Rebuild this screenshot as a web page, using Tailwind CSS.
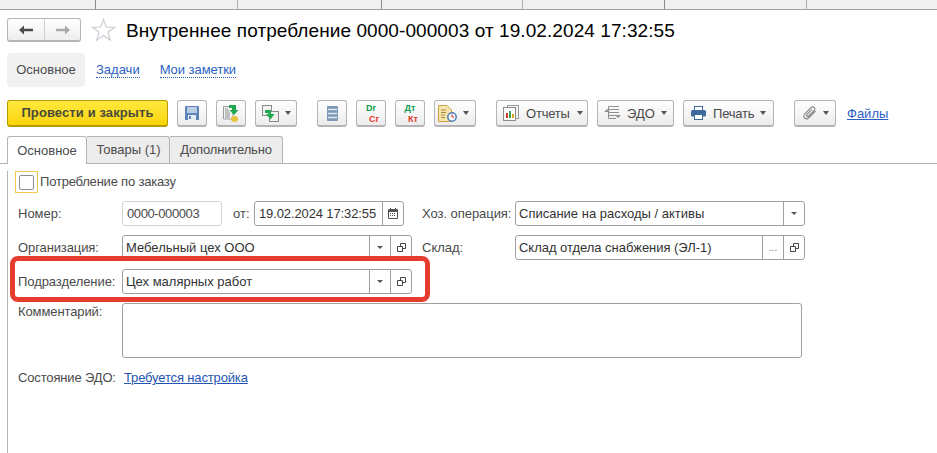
<!DOCTYPE html>
<html lang="ru">
<head>
  <meta charset="UTF-8" />
  <title>Внутреннее потребление</title>
  <script src="https://cdn.jsdelivr.net/npm/@tailwindcss/browser@4"></script>
</head>
<body class="bg-white w-[937px] h-[453px] overflow-hidden relative font-['Liberation_Sans',Arial,sans-serif] text-[13px] text-[#4b4b4b]">

  <!-- top strip -->
  <div class="h-[10px] bg-[#f0f0f0] border-b border-[#a0a0a0] flex">
    <div class="w-[96px] border-r border-[#8c8c8c]"></div>
    <div class="w-[142px] border-r border-[#b0b0b0]"></div>
    <div class="w-[144px] border-r border-[#8c8c8c]"></div>
    <div class="w-[141px] border-r border-[#b0b0b0]"></div>
    <div class="w-[142px] border-r border-[#8c8c8c]"></div>
    <div class="w-[142px] border-r border-[#b0b0b0]"></div>
  </div>

  <!-- title -->
  <div class="flex items-center h-[24px] mt-[8px] pl-[7px]">
    <div class="flex w-[74px] h-[24px] rounded-[3px] border border-[#b4b4b4] border-b-2 bg-gradient-to-b from-white to-[#eeeeee]">
      <div class="w-[37px] border-r border-[#d0d0d0] flex items-center justify-center">
        <svg width="16" height="12" viewBox="0 0 16 12"><path d="M1 6 L6 1.5 V4.7 H15 V7.3 H6 V10.5 Z" fill="#4a4a4a"/></svg>
      </div>
      <div class="flex-1 flex items-center justify-center">
        <svg width="16" height="12" viewBox="0 0 16 12"><path d="M15 6 L10 1.5 V4.7 H1 V7.3 H10 V10.5 Z" fill="#a8a8a8"/></svg>
      </div>
    </div>
    <svg class="ml-[10px]" width="25" height="24" viewBox="0 0 25 24"><path d="M12.5 1.5 L15.3 9 L23.5 9.3 L17 14.3 L19.4 22.3 L12.5 17.6 L5.6 22.3 L8 14.3 L1.5 9.3 L9.7 9 Z" fill="white" stroke="#c9ced3" stroke-width="1.2"/></svg>
    <h1 class="ml-[10px] text-[19px] tracking-[0.08px] text-black leading-none font-normal whitespace-nowrap">Внутреннее потребление 0000-000003 от 19.02.2024 17:32:55</h1>
  </div>

  <!-- form sections -->
  <div class="flex items-center h-[34px] mt-[11px] pl-[7px]">
    <div class="w-[78px] h-[34px] bg-[#f1f1f1] rounded-[4px] flex items-center justify-center">Основное</div>
    <a class="ml-[11px] text-[#2a5fc4] border-b border-dotted border-[#2a5fc4] leading-[14px]">Задачи</a>
    <a class="ml-[20px] text-[#2a5fc4] border-b border-dotted border-[#2a5fc4] leading-[14px] tracking-[-0.05px]">Мои заметки</a>
  </div>

  <!-- command bar -->
  <div class="flex items-start h-[27px] mt-[13px] pl-[7px]">
    <button class="w-[161px] h-[27px] rounded-[3px] border border-[#b59b00] border-b-2 bg-gradient-to-b from-[#ffe93b] to-[#fbd400] font-bold text-[13px] tracking-[0.1px] text-[#4a4a3a]">Провести и закрыть</button>
    <button class="ml-[9px] w-[30px] h-[27px] rounded-[3px] border border-[#b4b4b4] border-b-2 bg-gradient-to-b from-white to-[#ececec] flex items-center justify-center">
      <svg width="14" height="14" viewBox="0 0 14 14"><path d="M0 1 Q0 0 1 0 H13 Q14 0 14 1 V14 H0 Z" fill="#5c84b8"/><rect x="2" y="1" width="10" height="6" fill="#b9cde6"/><rect x="3" y="9" width="8" height="5" fill="#e6ecf3"/><rect x="4" y="10" width="2" height="3" fill="#5c84b8"/></svg>
    </button>
    <button class="ml-[9px] w-[30px] h-[27px] rounded-[3px] border border-[#b4b4b4] border-b-2 bg-gradient-to-b from-white to-[#ececec] flex items-center justify-center">
      <svg width="16" height="18" viewBox="0 0 16 18"><path d="M0.5 2.5 H10 V15 H0.5 Z" fill="#f4f4f4" stroke="#9a9a9a"/><path d="M2 5 H5 M2 7 H6 M2 9 H7 M2 11 H7 M2 13 H7" stroke="#8a8a8a"/><ellipse cx="11.5" cy="15" rx="3.5" ry="3" fill="#e8c33c"/><path d="M6 4 V1 H13 V6 H15.5 L11 11 L6.5 6 H9 V4 Z" fill="#1fa84f"/></svg>
    </button>
    <button class="ml-[9px] w-[42px] h-[27px] rounded-[3px] border border-[#b4b4b4] border-b-2 bg-gradient-to-b from-white to-[#ececec] flex items-center pl-[6px] gap-[6px]">
      <svg width="17" height="17" viewBox="0 0 17 17"><rect x="0.5" y="0.5" width="9" height="10" fill="#f1f1f1" stroke="#8b8b8b"/><rect x="7.5" y="6.5" width="9" height="10" fill="#f1f1f1" stroke="#8b8b8b"/><path d="M3 5 H9 V9 H12.5 L8.5 14.5 L4 9 H6.5 V8 H3 Z" fill="#1fa84f"/></svg>
      <span class="w-0 h-0 border-x-[3.5px] border-x-transparent border-t-[4px] border-t-[#555]"></span>
    </button>
    <button class="ml-[20px] w-[30px] h-[27px] rounded-[3px] border border-[#b4b4b4] border-b-2 bg-gradient-to-b from-white to-[#ececec] flex items-center justify-center">
      <svg width="11" height="15" viewBox="0 0 11 15"><rect width="11" height="15" rx="1" fill="#7d97b5"/><path d="M1 3.5 H10 M1 7.5 H10 M1 11.5 H10" stroke="#dfe7f0" stroke-width="1.4"/></svg>
    </button>
    <button class="ml-[9px] w-[30px] h-[27px] rounded-[3px] border border-[#b4b4b4] border-b-2 bg-gradient-to-b from-white to-[#ececec] flex flex-col px-[6px] pt-[2px] text-[9px] font-bold leading-[10.5px]">
      <span class="text-[#0f9a4a]">Dr</span><span class="self-end text-[#e5352b]">Cr</span>
    </button>
    <button class="ml-[9px] w-[30px] h-[27px] rounded-[3px] border border-[#b4b4b4] border-b-2 bg-gradient-to-b from-white to-[#ececec] flex flex-col px-[6px] pt-[2px] text-[9px] font-bold leading-[10.5px]">
      <span class="text-[#0f9a4a]">Дт</span><span class="self-end text-[#e5352b]">Кт</span>
    </button>
    <button class="ml-[9px] w-[42px] h-[27px] rounded-[3px] border border-[#b4b4b4] border-b-2 bg-gradient-to-b from-white to-[#ececec] flex items-center pl-[3px] gap-[6px]">
      <svg width="19" height="17" viewBox="0 0 19 17"><path d="M0.5 0.5 H9 L13.5 5 V16.5 H0.5 Z" fill="#f6e6ae" stroke="#c9a243"/><path d="M3 5 H8 M3 7.5 H8 M3 10 H7 M3 12.5 H7" stroke="#a98b3c"/><circle cx="14" cy="12" r="4.2" fill="#f5f7fa" stroke="#4f7db5" stroke-width="1.5"/><path d="M14 9.5 V12 H16" stroke="#d33" fill="none"/></svg>
      <span class="w-0 h-0 border-x-[3.5px] border-x-transparent border-t-[4px] border-t-[#555]"></span>
    </button>
    <button class="ml-[20px] w-[92px] h-[27px] rounded-[3px] border border-[#b4b4b4] border-b-2 bg-gradient-to-b from-white to-[#ececec] flex items-center pl-[6px]">
      <svg width="16" height="16" viewBox="0 0 16 16"><rect x="4.5" y="0.5" width="11" height="13" fill="#f4f4f4" stroke="#9a9a9a"/><rect x="0.5" y="2.5" width="12" height="13" fill="#fff" stroke="#8b8b8b"/><rect x="3" y="8" width="2" height="5" fill="#d33c2c"/><rect x="6" y="6" width="2" height="7" fill="#3aa655"/><rect x="9" y="9" width="2" height="4" fill="#d9a520"/></svg>
      <span class="ml-[7px] pt-px tracking-[-0.2px]">Отчеты</span>
      <span class="ml-[7px] w-0 h-0 border-x-[3.5px] border-x-transparent border-t-[4px] border-t-[#555]"></span>
    </button>
    <button class="ml-[9px] w-[77px] h-[27px] rounded-[3px] border border-[#b4b4b4] border-b-2 bg-gradient-to-b from-white to-[#ececec] flex items-center pl-[6px]">
      <svg width="17" height="15" viewBox="0 0 17 15"><path d="M4.5 0.5 H15 M4.5 3.5 H15 M4.5 6.5 H15 M4.5 9.5 H15 M4.5 12.5 H12 M4.5 0.5 V12.5" stroke="#8f8f8f" fill="none"/><path d="M0 6 L3 3 L6 6 Z M11 9 L17 9 L14 12 Z" fill="#8f8f8f"/></svg>
      <span class="ml-[6px] pt-px">ЭДО</span>
      <span class="ml-[6px] w-0 h-0 border-x-[3.5px] border-x-transparent border-t-[4px] border-t-[#555]"></span>
    </button>
    <button class="ml-[9px] w-[91px] h-[27px] rounded-[3px] border border-[#b4b4b4] border-b-2 bg-gradient-to-b from-white to-[#ececec] flex items-center pl-[7px]">
      <svg width="15" height="14" viewBox="0 0 15 14"><rect x="3.5" y="0.5" width="8" height="4" fill="#fff" stroke="#3d6a9c"/><rect x="0" y="4" width="15" height="6.5" rx="1.5" fill="#3d6a9c"/><rect x="3.5" y="8.5" width="8" height="5" fill="#fff" stroke="#3d6a9c"/></svg>
      <span class="ml-[7px] pt-px tracking-[-0.2px]">Печать</span>
      <span class="ml-[6px] w-0 h-0 border-x-[3.5px] border-x-transparent border-t-[4px] border-t-[#555]"></span>
    </button>
    <button class="ml-[20px] w-[42px] h-[27px] rounded-[3px] border border-[#b4b4b4] border-b-2 bg-gradient-to-b from-white to-[#ececec] flex items-center pl-[8px] gap-[6px]">
      <svg width="14" height="14" viewBox="0 0 14 14"><path d="M12.5 5 L6 11.5 C4.5 13 2.5 13 1.5 12 C0.5 11 0.7 9 2 7.7 L8 1.7 C9 .7 10.3 .7 11.2 1.5 C12 2.3 12 3.6 11 4.6 L5.5 10 C5 10.5 4.2 10.5 3.8 10 C3.4 9.6 3.4 8.9 3.9 8.4 L9 3.4" fill="none" stroke="#8a8a8a" stroke-width="1.2"/></svg>
      <span class="w-0 h-0 border-x-[3.5px] border-x-transparent border-t-[4px] border-t-[#555]"></span>
    </button>
    <a class="ml-[11px] mt-[7px] text-[#2a5fc4] underline leading-[14px]">Файлы</a>
  </div>

  <!-- tabs -->
  <div class="flex h-[28px] mt-[9px] pl-[7px] border-b border-[#b4b4b4] items-end">
    <div class="w-[80px] h-[28px] -mb-px bg-white border border-b-0 border-[#b4b4b4] rounded-t-[3px] flex items-center justify-center">Основное</div>
    <div class="w-[83px] h-[27px] pl-[1px] bg-[#ececec] border-r border-t border-[#b4b4b4] rounded-tr-[3px] flex items-center justify-center">Товары (1)</div>
    <div class="w-[113px] h-[27px] bg-[#ececec] border-r border-t border-[#b4b4b4] rounded-tr-[3px] flex items-center justify-center tracking-[-0.15px]">Дополнительно</div>
  </div>

  <!-- form -->
  <div class="ml-[7px] h-[290px] border-l border-[#b4b4b4] pl-[10px]">
    <div class="flex items-center h-[22px] mt-[7px] -ml-[3px]">
      <div class="w-[23px] h-[22px] border border-[#f2c94c] flex items-center justify-center">
        <div class="w-[15px] h-[15px] rounded-[2px] border border-[#8f8f8f] bg-white"></div>
      </div>
      <span class="ml-[2px] tracking-[-0.2px]">Потребление по заказу</span>
    </div>

    <div class="flex items-center h-[25px] mt-[8px]">
      <span class="w-[104px] shrink-0">Номер:</span>
      <div class="w-[100px] shrink-0 h-[25px] border border-[#d4d4d4] rounded-[3px] flex items-center pl-[4px] tracking-[-0.4px]">0000-000003</div>
      <span class="ml-[11px] w-[21px] shrink-0">от:</span>
      <div class="w-[150px] shrink-0 h-[25px] border border-[#a0a0a0] rounded-[3px] flex items-center pl-[4px] text-[#333]">
        <span class="flex-1 whitespace-nowrap tracking-[-0.12px]">19.02.2024 17:32:55</span>
        <span class="w-[21px] h-full border-l border-[#a0a0a0] flex items-center justify-center">
          <svg width="10" height="11" viewBox="0 0 10 11"><rect y="1" width="10" height="10" rx="1" fill="#555"/><rect x="1" y="4" width="8" height="6" fill="#fff"/><path d="M2 5.5 H8 M2 7.5 H8" stroke="#555" stroke-dasharray="1 1"/><path d="M2.5 0 V2 M7.5 0 V2" stroke="#555"/></svg>
        </span>
      </div>
      <span class="ml-[18px] w-[93px] shrink-0 whitespace-nowrap tracking-[-0.05px]">Хоз. операция:</span>
      <div class="w-[290px] shrink-0 h-[25px] border border-[#a0a0a0] rounded-[3px] flex items-center pl-[3px] text-[#333]">
        <span class="flex-1">Списание на расходы / активы</span>
        <span class="w-[21px] h-full border-l border-[#a0a0a0] flex items-center justify-center"><span class="w-0 h-0 border-x-[3px] border-x-transparent border-t-[3px] border-t-[#555]"></span></span>
      </div>
    </div>

    <div class="flex items-center h-[25px] mt-[9px]">
      <span class="w-[104px] shrink-0 tracking-[-0.1px]">Организация:</span>
      <div class="w-[290px] shrink-0 h-[25px] border border-[#a0a0a0] rounded-[3px] flex items-center pl-[3px] text-[#333]">
        <span class="flex-1">Мебельный цех ООО</span>
        <span class="w-[21px] h-full border-l border-[#a0a0a0] flex items-center justify-center"><span class="w-0 h-0 border-x-[3px] border-x-transparent border-t-[3px] border-t-[#555]"></span></span>
        <span class="w-[21px] h-full border-l border-[#a0a0a0] flex items-center justify-center">
          <svg width="9" height="9" viewBox="0 0 9 9"><path d="M3.5 3 V.5 H8.5 V5.5 H5.5 M.5 3.5 H5.5 V8.5 H.5 Z" fill="none" stroke="#444"/></svg>
        </span>
      </div>
      <span class="ml-[10px] w-[93px] shrink-0">Склад:</span>
      <div class="w-[290px] shrink-0 h-[25px] border border-[#a0a0a0] rounded-[3px] flex items-center pl-[3px] text-[#333]">
        <span class="flex-1 tracking-[-0.03px]">Склад отдела снабжения (ЭЛ-1)</span>
        <span class="w-[21px] h-full border-l border-[#a0a0a0] flex items-center justify-center text-[10px] text-[#777]">...</span>
        <span class="w-[21px] h-full border-l border-[#a0a0a0] flex items-center justify-center">
          <svg width="9" height="9" viewBox="0 0 9 9"><path d="M3.5 3 V.5 H8.5 V5.5 H5.5 M.5 3.5 H5.5 V8.5 H.5 Z" fill="none" stroke="#444"/></svg>
        </span>
      </div>
    </div>

    <div class="flex items-center h-[25px] mt-[9px]">
      <span class="w-[104px] shrink-0 whitespace-nowrap tracking-[-0.07px]">Подразделение:</span>
      <div class="w-[290px] shrink-0 h-[25px] border border-[#a0a0a0] rounded-[3px] flex items-center pl-[3px] text-[#333]">
        <span class="flex-1">Цех малярных работ</span>
        <span class="w-[21px] h-full border-l border-[#a0a0a0] flex items-center justify-center"><span class="w-0 h-0 border-x-[3px] border-x-transparent border-t-[3px] border-t-[#555]"></span></span>
        <span class="w-[21px] h-full border-l border-[#a0a0a0] flex items-center justify-center">
          <svg width="9" height="9" viewBox="0 0 9 9"><path d="M3.5 3 V.5 H8.5 V5.5 H5.5 M.5 3.5 H5.5 V8.5 H.5 Z" fill="none" stroke="#444"/></svg>
        </span>
      </div>
    </div>

    <div class="flex items-start h-[55px] mt-[9px]">
      <span class="w-[104px] leading-[18px] tracking-[-0.1px]">Комментарий:</span>
      <div class="w-[680px] h-[55px] border border-[#a0a0a0] rounded-[3px]"></div>
    </div>

    <div class="flex items-center h-[16px] mt-[12px]">
      <span class="w-[106px] whitespace-nowrap tracking-[-0.15px]">Состояние ЭДО:</span>
      <a class="text-[#1f56b3] underline tracking-[-0.15px]">Требуется настройка</a>
    </div>
  </div>

  <!-- red highlight over the field -->
  <div class="absolute left-[10px] top-[256px] w-[420px] h-[46px] border-[5px] border-[#e53d30] rounded-[8px]"></div>

</body>
</html>
